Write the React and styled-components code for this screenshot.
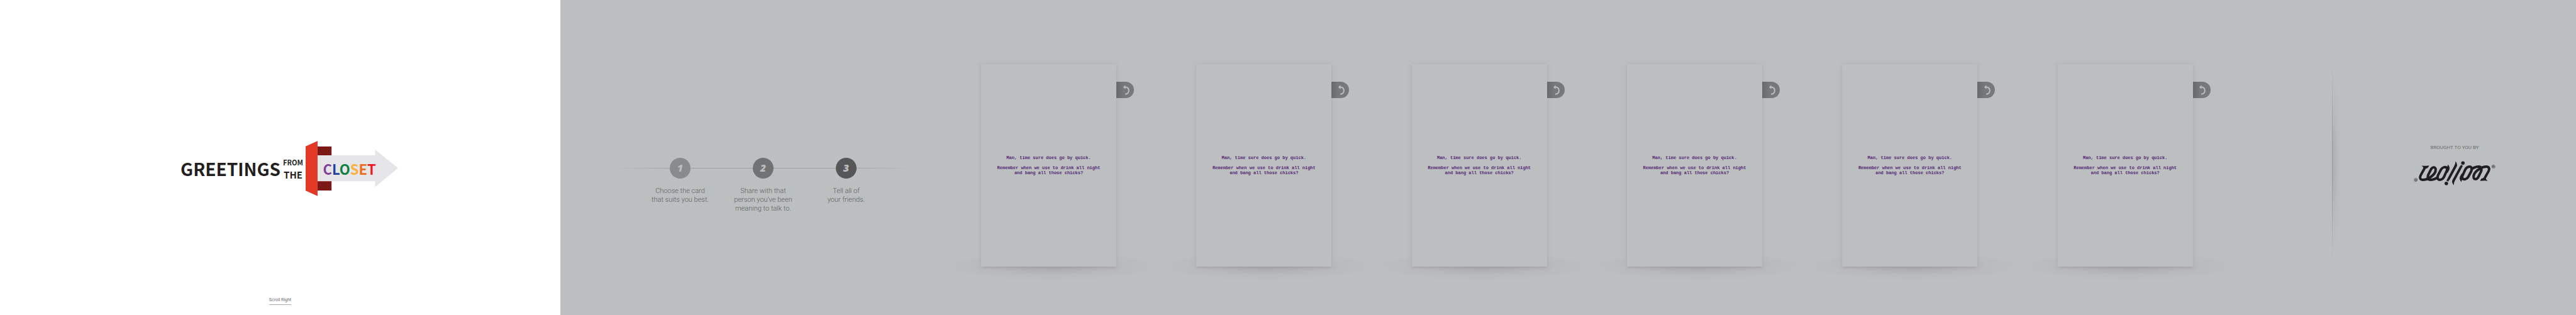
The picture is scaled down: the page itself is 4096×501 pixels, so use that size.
import React from 'react';
import styled, { createGlobalStyle } from 'styled-components';

const GlobalStyle = createGlobalStyle`
  * { box-sizing: border-box; }
  html, body { margin: 0; padding: 0; }
  body {
    background: #bbbfbf;
    color: #5c5e60;
    font-family: Roboto, "Liberation Sans", sans-serif;
  }
`;

const Page = styled.main`
  display: grid;
  grid-template-columns: 891fr 669fr 2054fr 482fr;
  min-height: 100vh;
  overflow: hidden;
`;

const Intro = styled.section`
  display: flex;
  flex-direction: column;
  align-items: center;
  justify-content: space-between;
  padding: 224px 0 16px;
  background: #fff;
`;

const Logo = styled.h1`
  display: flex;
  align-items: center;
  gap: 5px;
  margin: 0;
  padding-left: 28px;
  color: #231f20;
  font-family: "Noto Sans CJK JP", "Liberation Sans", sans-serif;
  font-weight: 700;
  white-space: nowrap;
`;

const Greetings = styled.span`
  display: flex;
  justify-content: center;
  width: 160px;
  font-size: 28px;
  line-height: 38px;
`;

const Stack = styled.span`
  display: flex;
  flex-direction: column;
  align-items: center;
  width: 29px;
  line-height: 19px;
`;

const StackWord = styled.span`
  font-size: ${(p) => p.$size}px;
`;

const Mark = styled.span`
  display: grid;
  align-items: center;

  > * { grid-area: 1 / 1; }
`;

const Closet = styled.span`
  padding-left: 28px;
  font-size: 22px;
  line-height: 32px;
`;

const Letter = styled.span`
  color: ${(p) => p.$color};
`;

const ScrollLink = styled.a`
  border-bottom: 1px solid #a7a9ac;
  color: #6d6e71;
  font-size: 7px;
  line-height: 14px;
  text-decoration: none;
`;

const Steps = styled.section`
  padding: 251px 24px 0 0;
`;

const StepList = styled.ol`
  display: grid;
  grid-template-columns: repeat(3, 132px);
  justify-content: center;
  width: 480px;
  margin: 0 auto;
  padding: 0;
  list-style: none;
  background: linear-gradient(90deg, transparent, #9b9da0 22%, #9b9da0 78%, transparent) 0 16px / 100% 1px no-repeat;
`;

const Step = styled.li`
  display: flex;
  flex-direction: column;
  align-items: center;
  gap: 13px;
  text-align: center;
`;

const StepNumber = styled.span`
  width: 33px;
  height: 33px;
  border-radius: 50%;
  background: ${(p) => p.$color};
  color: #bbbfbf;
  font: italic 800 16px/33px "Open Sans", sans-serif;
`;

const StepText = styled.p`
  margin: 0;
  font-size: 11px;
  font-weight: 300;
  line-height: 14px;
`;

const Cards = styled.section`
  display: grid;
  grid-template-columns: repeat(6, 1fr);
  align-items: center;
  padding-top: 25px;
`;

const CardSlot = styled.div`
  display: flex;
  position: relative;
  align-items: flex-start;

  &::before {
    content: "";
    position: absolute;
    left: -17%;
    bottom: -22px;
    width: 100%;
    height: 46px;
    background: radial-gradient(closest-side, rgba(160, 161, 164, 0.8), rgba(182, 181, 184, 0.6) 60%, transparent);
  }
`;

const Card = styled.article`
  display: flex;
  position: relative;
  flex: 0 0 215px;
  flex-direction: column;
  justify-content: center;
  gap: 8px;
  height: 322px;
  background: #bbbfbf;
  box-shadow: 0 0 7px rgba(176, 170, 173, 0.7), 0 2px 3px -1px rgba(130, 132, 134, 0.5);
  color: #592878;
  font: 700 7px/8px "Liberation Mono", monospace;
  text-align: center;
`;

const CardText = styled.p`
  margin: 0;
`;

const FlipButton = styled.button`
  display: flex;
  position: relative;
  align-items: center;
  justify-content: center;
  width: 28px;
  height: 26px;
  margin: 28px 0 0;
  padding: 0 0 0 3px;
  border: 0;
  border-radius: 0 13px 13px 0;
  background: linear-gradient(90deg, #68696b, #77787a 40%);
`;

const Closing = styled.footer`
  display: flex;
  align-items: flex-start;
  padding: 106px 0 0 94px;
`;

const Divider = styled.div`
  flex: 0 0 14px;
  height: 306px;
  background:
    linear-gradient(transparent, #999b9d 40%, #999b9d 60%, transparent) 0 0 / 1px 100% no-repeat,
    radial-gradient(ellipse 14px 150px at 0 50%, rgba(164, 165, 168, 0.8), rgba(184, 183, 186, 0.6) 65%, rgba(187, 191, 191, 0));
`;

const Credit = styled.div`
  display: flex;
  flex: 1;
  flex-direction: column;
  align-items: center;
  gap: 16px;
  padding: 124px 12px 0 0;
`;

const CreditLabel = styled.span`
  color: #6d6e71;
  font-size: 8px;
  line-height: 10px;
`;

const letters = [
  ['C', '#7f3f98'], ['L', '#21409a'], ['O', '#0b8040'],
  ['S', '#fbb040'], ['E', '#f06b22'], ['T', '#ed1c24'],
];

const steps = [
  ['#898a8c', 'Choose the card', 'that suits you best.'],
  ['#717274', 'Share with that', 'person you’ve been', 'meaning to talk to.'],
  ['#555658', 'Tell all of', 'your friends.'],
];

function ClosetArrow() {
  return (
    <svg width="147" height="88" viewBox="744 343 225 134" aria-hidden="true">
      <path fill="#7c1816" d="M773 356.5h34v107h-34z" />
      <path fill="#e6e6e8" d="M773 378h140v-14l56 45-56 46v-14H773z" />
      <path fill="#e33826" d="M744 356l29-13v134l-29-13z" />
    </svg>
  );
}

function FlipIcon() {
  return (
    <svg width="12" height="16" viewBox="136 74 48 74" aria-hidden="true">
      <path d="M150 90c18 0 28 11 28 26 0 14-10 26-27 26" fill="none" stroke="#bbbfbf" strokeWidth="9" />
      <path d="M137 91l16-16v30z" fill="#bbbfbf" />
    </svg>
  );
}

function RealLionHalf() {
  return (
    <>
      <g fill="none" stroke="#201e20" strokeWidth="18">
        <path d="M208 234L177 290C166 312 176 325 195 324C235 322 289 282 286 247C284 229 265 227 253 245L233 285C222 310 232 325 250 324C272 323 290 315 304 302" />
        <path d="M344 233C362 226 376 238 368 255L348 300C336 325 312 329 302 317C297 308 299 300 304 288L326 247C332 238 338 235 344 233Z" />
      </g>
      <g fill="#201e20">
        <path d="M183 219Q202 224 238 219Q232 240 214 241L198 240Q194 226 183 219Z" />
        <path d="M375 211Q391 228 387 248L372 276L358 238Q375 229 375 211Z" />
        <path d="M430 188Q447 206 441 225L388 322Q379 330 378 337Q372 331 364 331L422 222Q432 206 430 188Z" />
        <circle cx="364" cy="350" r="13" />
      </g>
      <g fill="none" stroke="#201e20" strokeWidth="2.5">
        <circle cx="141" cy="324" r="11.5" />
        <path strokeWidth="3.5" d="M137 318v8q0 4 7 2M145 318v12" />
      </g>
    </>
  );
}

function RealLionLogo() {
  return (
    <svg width="130" height="39" viewBox="126 186 597 179" role="img" aria-label="Real Lion">
      <RealLionHalf />
      <g transform="rotate(180 424.5 275.5)">
        <RealLionHalf />
      </g>
    </svg>
  );
}

export default function App() {
  return (
    <>
      <GlobalStyle />
      <Page>
        <Intro>
          <Logo>
            <Greetings>GREETINGS</Greetings>
            <Stack>
              <StackWord $size={11}>FROM</StackWord>
              <StackWord $size={15}>THE</StackWord>
            </Stack>
            <Mark>
              <ClosetArrow />
              <Closet>
                {letters.map(([char, color]) => (
                  <Letter key={char} $color={color}>{char}</Letter>
                ))}
              </Closet>
            </Mark>
          </Logo>
          <ScrollLink href="#steps">Scroll Right</ScrollLink>
        </Intro>
        <Steps id="steps">
          <StepList>
            {steps.map(([color, ...lines], i) => (
              <Step key={color}>
                <StepNumber $color={color}>{i + 1}</StepNumber>
                <StepText>
                  {lines.map((line) => (
                    <React.Fragment key={line}>{line}<br /></React.Fragment>
                  ))}
                </StepText>
              </Step>
            ))}
          </StepList>
        </Steps>
        <Cards>
          {Array.from({ length: 6 }, (_, i) => (
            <CardSlot key={i}>
              <Card>
                <CardText>Man, time sure does go by quick.</CardText>
                <CardText>Remember when we use to drink all night<br />and bang all those chicks?</CardText>
              </Card>
              <FlipButton type="button" aria-label="Flip card">
                <FlipIcon />
              </FlipButton>
            </CardSlot>
          ))}
        </Cards>
        <Closing>
          <Divider />
          <Credit>
            <CreditLabel>BROUGHT TO YOU BY</CreditLabel>
            <RealLionLogo />
          </Credit>
        </Closing>
      </Page>
    </>
  );
}
